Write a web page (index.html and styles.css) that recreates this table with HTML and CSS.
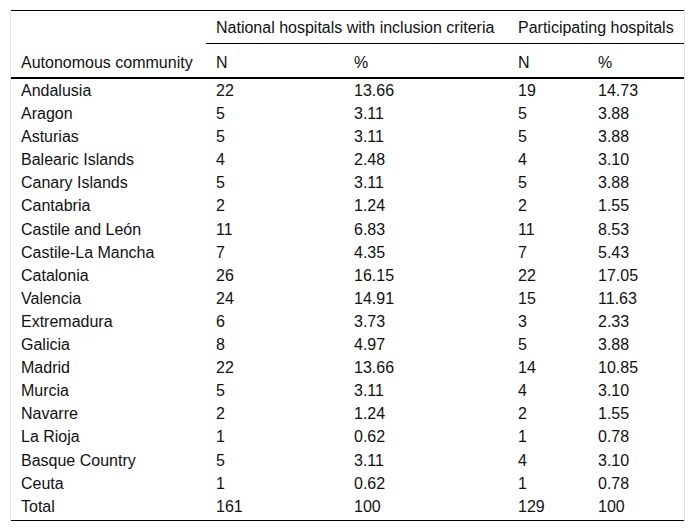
FILE: index.html
```html
<!DOCTYPE html>
<html>
<head>
<meta charset="utf-8">
<link rel="stylesheet" href="styles.css">
</head>
<body>
<div class="wrap">
<table class="tbl">
<colgroup>
<col class="c0"><col class="c1"><col class="c2"><col class="c3"><col class="c4">
</colgroup>
<thead>
<tr class="hr1">
<th rowspan="2" class="label">Autonomous community</th>
<th colspan="2" class="grp">National hospitals with inclusion criteria</th>
<th colspan="2" class="grp">Participating hospitals</th>
</tr>
<tr class="hr2">
<th>N</th><th>%</th><th>N</th><th>%</th>
</tr>
</thead>
<tbody>
<tr><td>Andalusia</td><td>22</td><td>13.66</td><td>19</td><td>14.73</td></tr>
<tr><td>Aragon</td><td>5</td><td>3.11</td><td>5</td><td>3.88</td></tr>
<tr><td>Asturias</td><td>5</td><td>3.11</td><td>5</td><td>3.88</td></tr>
<tr><td>Balearic Islands</td><td>4</td><td>2.48</td><td>4</td><td>3.10</td></tr>
<tr><td>Canary Islands</td><td>5</td><td>3.11</td><td>5</td><td>3.88</td></tr>
<tr><td>Cantabria</td><td>2</td><td>1.24</td><td>2</td><td>1.55</td></tr>
<tr><td>Castile and León</td><td>11</td><td>6.83</td><td>11</td><td>8.53</td></tr>
<tr><td>Castile-La Mancha</td><td>7</td><td>4.35</td><td>7</td><td>5.43</td></tr>
<tr><td>Catalonia</td><td>26</td><td>16.15</td><td>22</td><td>17.05</td></tr>
<tr><td>Valencia</td><td>24</td><td>14.91</td><td>15</td><td>11.63</td></tr>
<tr><td>Extremadura</td><td>6</td><td>3.73</td><td>3</td><td>2.33</td></tr>
<tr><td>Galicia</td><td>8</td><td>4.97</td><td>5</td><td>3.88</td></tr>
<tr><td>Madrid</td><td>22</td><td>13.66</td><td>14</td><td>10.85</td></tr>
<tr><td>Murcia</td><td>5</td><td>3.11</td><td>4</td><td>3.10</td></tr>
<tr><td>Navarre</td><td>2</td><td>1.24</td><td>2</td><td>1.55</td></tr>
<tr><td>La Rioja</td><td>1</td><td>0.62</td><td>1</td><td>0.78</td></tr>
<tr><td>Basque Country</td><td>5</td><td>3.11</td><td>4</td><td>3.10</td></tr>
<tr><td>Ceuta</td><td>1</td><td>0.62</td><td>1</td><td>0.78</td></tr>
<tr><td>Total</td><td>161</td><td>100</td><td>129</td><td>100</td></tr>
</tbody>
</table>
</div>
</body>
</html>
```

FILE: styles.css
```css
html, body {
  margin: 0;
  padding: 0;
  background: #fff;
}
body {
  font-family: "Liberation Sans", Arial, sans-serif;
  font-size: 16px;
  color: #111;
}
.wrap {
  margin: 9px 0 0 10px;
  width: 673px;
  border-left: 1px solid #e3e3e3;
  border-right: 1px solid #e3e3e3;
  padding-top: 1px;
}
.tbl {
  width: 673px;
  border-collapse: collapse;
  table-layout: fixed;
  border-top: 1px solid #000;
  border-bottom: 1px solid #000;
}
.c0 { width: 195px; }
.c1 { width: 138px; }
.c2 { width: 164px; }
.c3 { width: 80px; }
.c4 { width: 96px; }
.tbl th {
  font-weight: normal;
  text-align: left;
  line-height: 17px;
  padding: 0 10px;
  white-space: nowrap;
}
.hr1 .grp {
  padding-top: 8px;
  padding-bottom: 7px;
  border-bottom: 1px solid #000;
}
.hr1 .label {
  vertical-align: bottom;
  padding-bottom: 6px;
  border-bottom: 2px solid #000;
}
.hr2 th {
  padding-top: 10px;
  padding-bottom: 6px;
  border-bottom: 2px solid #000;
}
.tbl td {
  padding: 3px 10px;
  line-height: 17.1px;
}
.tbl tbody tr:last-child td {
  padding-bottom: 5px;
}
```
